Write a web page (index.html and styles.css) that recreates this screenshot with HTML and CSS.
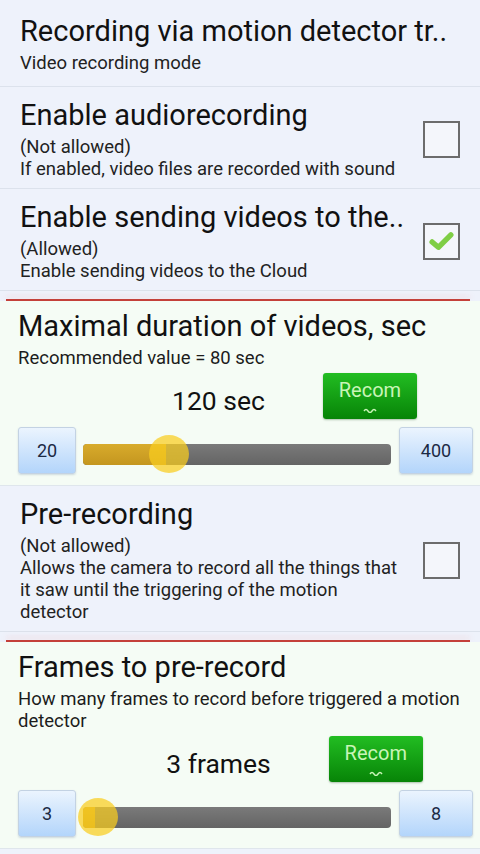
FILE: index.html
```html
<!DOCTYPE html>
<html lang="en">
<head>
  <meta charset="UTF-8" />
  <meta name="viewport" content="width=device-width, initial-scale=1.0"/>
  <title>Motion detector settings</title>
  <link rel="stylesheet" href="styles.css">
</head>
<body>
  <div class="item item-first">
    <div class="item-text">
      <div class="item-title">Recording via motion detector tr..</div>
      <div class="item-sub">Video recording mode</div>
    </div>
  </div>

  <div class="item">
    <div class="item-text">
      <div class="item-title">Enable audiorecording</div>
      <div class="item-sub">(Not allowed)<br>If enabled, video files are recorded with sound</div>
    </div>
    <span class="check"></span>
  </div>

  <div class="item">
    <div class="item-text">
      <div class="item-title">Enable sending videos to the..</div>
      <div class="item-sub">(Allowed)<br>Enable sending videos to the Cloud</div>
    </div>
    <span class="check">
      <svg viewBox="0 0 37 37" width="33" height="33">
        <path d="M8 19 L15 25 L29 11" fill="none" stroke="#7fce45" stroke-width="6" stroke-linecap="round" stroke-linejoin="round"/>
      </svg>
    </span>
  </div>

  <div class="divider"></div>

  <div class="slider-block">
    <div class="slider-title">Maximal duration of videos, sec</div>
    <div class="slider-sub">Recommended value = 80 sec</div>
    <div class="value-row">
      <span class="value">120 sec</span>
      <button class="recom">Recom
        <svg viewBox="0 0 14 5" width="14" height="5"><path d="M1 3 Q3 0 5 3 T9 3 T13 3" fill="none" stroke="#c9f5b8" stroke-width="1.4"/></svg>
      </button>
    </div>
    <div class="slider-row">
      <button class="end-btn">20</button>
      <div class="track">
        <div class="fill" style="width: 27%"></div>
        <div class="thumb" style="left: 28%"></div>
      </div>
      <button class="end-btn end-wide">400</button>
    </div>
  </div>

  <div class="item">
    <div class="item-text">
      <div class="item-title">Pre-recording</div>
      <div class="item-sub">(Not allowed)<br>Allows the camera to record all the things that it saw until the triggering of the motion detector</div>
    </div>
    <span class="check"></span>
  </div>

  <div class="divider"></div>

  <div class="slider-block">
    <div class="slider-title">Frames to pre-record</div>
    <div class="slider-sub">How many frames to record before triggered a motion detector</div>
    <div class="value-row">
      <span class="value">3 frames</span>
      <button class="recom">Recom
        <svg viewBox="0 0 14 5" width="14" height="5"><path d="M1 3 Q3 0 5 3 T9 3 T13 3" fill="none" stroke="#c9f5b8" stroke-width="1.4"/></svg>
      </button>
    </div>
    <div class="slider-row">
      <button class="end-btn">3</button>
      <div class="track">
        <div class="fill" style="width: 4%"></div>
        <div class="thumb" style="left: 5%"></div>
      </div>
      <button class="end-btn end-wide">8</button>
    </div>
  </div>

  <div class="item item-tail"></div>
</body>
</html>
```

FILE: styles.css
```css
body {
  margin: 0;
  background: #eef2fb;
  font-family: Roboto, "Noto Sans", sans-serif;
  color: #111;
  overflow: hidden;
}

/* list rows */
.item {
  display: flex;
  align-items: center;
  padding: 11px 20px 8px;
  border-bottom: 1px solid #dce2ec;
}

.item-first {
  padding-top: 14px;
  padding-bottom: 12px;
}

.item-tail {
  padding: 0;
  height: 6px;
  border: none;
}

.item-text {
  flex: 1;
}

.item-title {
  font-size: 29px;
  line-height: 34px;
  white-space: nowrap;
}

.item-sub {
  margin-top: 4px;
  font-size: 18.5px;
  line-height: 22px;
  color: #222;
  padding-right: 18px;
}

.check {
  width: 33px;
  height: 33px;
  flex: none;
  border: 2px solid #6c6c6c;
  background: #f4f6fb;
  display: flex;
  align-items: center;
  justify-content: center;
}

/* red separator */
.divider {
  height: 2px;
  margin: 8px 10px 0 6px;
  background: #c4403a;
  box-shadow: 0 -3px 5px rgba(245, 170, 170, 0.35);
}

/* slider sections */
.slider-block {
  background: #f5fcf5;
  padding: 8px 7px 11px 18px;
  border-bottom: 1px solid #dfe6ec;
}

.slider-title {
  font-size: 29px;
  line-height: 34px;
}

.slider-sub {
  margin-top: 4px;
  font-size: 18.5px;
  line-height: 22px;
  color: #1c1c1c;
}

.value-row {
  display: flex;
  justify-content: center;
  align-items: center;
  gap: 58px;
  margin-top: 4px;
  padding-left: 98px;
}

.value {
  font-size: 26.5px;
  padding-top: 8px;
}

.recom {
  width: 94px;
  height: 46px;
  border: none;
  border-radius: 3px;
  background: linear-gradient(#22bd22, #078407);
  color: #c9f5b8;
  font-family: Roboto, sans-serif;
  font-size: 20px;
  line-height: 22px;
  padding: 6px 0 0;
  display: flex;
  flex-direction: column;
  align-items: center;
  justify-content: flex-start;
  gap: 7px;
  box-shadow: 0 1px 2px rgba(0, 60, 0, 0.3);
}

.slider-row {
  display: flex;
  align-items: center;
  gap: 7px;
  margin-top: 8px;
}

.end-btn {
  width: 58px;
  height: 47px;
  border: 1px solid #c3d2e3;
  border-radius: 3px;
  background: linear-gradient(#ebf4fe, #b3d5fb);
  color: #1b2a44;
  font-family: Roboto, sans-serif;
  font-size: 18px;
  flex: none;
  box-shadow: 0 1px 2px rgba(60, 90, 130, 0.2);
}

.end-wide {
  width: 74px;
  margin-left: 1px;
}

.track {
  position: relative;
  flex: 1;
  height: 21px;
  margin-top: 7px;
  border-radius: 4px;
  background: linear-gradient(#7a7a7a, #646464);
}

.fill {
  height: 100%;
  border-radius: 4px 0 0 4px;
  background: linear-gradient(#d8ab2c, #c4961f);
}

.thumb {
  position: absolute;
  top: 50%;
  width: 40px;
  height: 38px;
  border-radius: 50%;
  transform: translate(-50%, -50%);
  background: rgba(250, 205, 30, 0.72);
}
```
